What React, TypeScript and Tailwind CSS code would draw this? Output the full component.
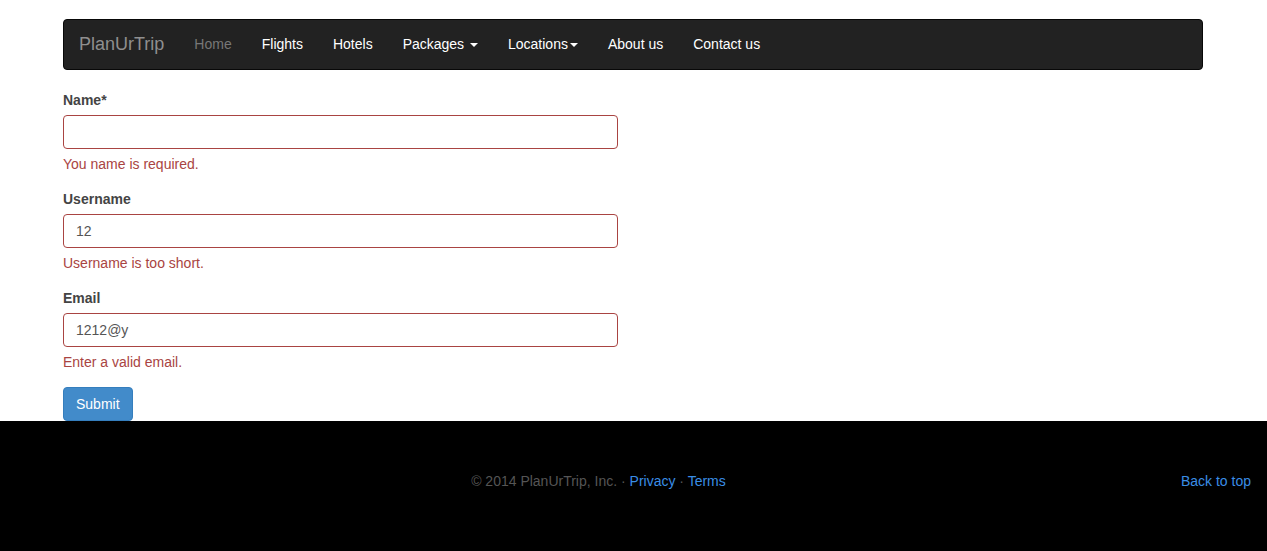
import type { ReactNode } from 'react';

function Caret() {
  return (
    <span className="ml-[2px] inline-block h-0 w-0 border-x-[4px] border-t-[4px] border-x-transparent border-t-white align-middle" />
  );
}

function NavLink({ children, muted }: { children: ReactNode; muted?: boolean }) {
  return (
    <a
      href="#"
      className={
        muted
          ? 'px-[15px] py-[14px] text-[14px] leading-[20px] text-[#777]'
          : 'px-[15px] py-[14px] text-[14px] leading-[20px] text-white'
      }
    >
      {children}
    </a>
  );
}

interface FieldProps {
  label: string;
  value: string;
  error: string;
}

function Field({ label, value, error }: FieldProps) {
  return (
    <div className="mb-[15px]">
      <label className="mb-[5px] block text-[14px] font-bold leading-[20px] text-[#444]">{label}</label>
      <input
        readOnly
        value={value}
        className="block h-[34px] w-full rounded-[4px] border border-[#a94442] bg-white px-[12px] py-[6px] text-[14px] leading-[20px] text-[#555] outline-none"
      />
      <p className="mt-[5px] text-[14px] leading-[20px] text-[#a94442]">{error}</p>
    </div>
  );
}

export default function App() {
  return (
    <div className="min-h-[551px] bg-white font-['Liberation_Sans',Arial,sans-serif]">
      <div className="ml-[48px] w-[1170px] px-[15px] pt-[19px]">
        {/* Navbar */}
        <nav className="mb-[20px] flex h-[51px] items-start rounded-[4px] border border-[#080808] bg-[#222]">
          <a href="#" className="px-[15px] py-[14px] text-[18px] leading-[20px] text-[#8f8f8f]">
            PlanUrTrip
          </a>
          <NavLink muted>Home</NavLink>
          <NavLink>Flights</NavLink>
          <NavLink>Hotels</NavLink>
          <NavLink>
            Packages <Caret />
          </NavLink>
          <NavLink>
            Locations<Caret />
          </NavLink>
          <NavLink>About us</NavLink>
          <NavLink>Contact us</NavLink>
        </nav>

        {/* Form */}
        <form className="w-[555px]">
          <Field label="Name*" value="" error="You name is required." />
          <Field label="Username" value="12" error="Username is too short." />
          <Field label="Email" value="1212@y" error="Enter a valid email." />
          <button
            type="button"
            className="h-[34px] rounded-[4px] border border-[#357ebd] bg-[#428bca] px-[12px] text-[14px] leading-[20px] text-white"
          >
            Submit
          </button>
        </form>
      </div>

      {/* Footer */}
      <footer className="flex h-[130px] items-start bg-black px-[16px] pt-[50px] text-[14px] leading-[20px]">
        <p className="flex-1 text-center text-[#555]">
          © 2014 PlanUrTrip, Inc. · <a href="#" className="text-[#3a8ee6]">Privacy</a> ·{' '}
          <a href="#" className="text-[#3a8ee6]">Terms</a>
        </p>
        <a href="#" className="text-[#3a8ee6]">
          Back to top
        </a>
      </footer>
    </div>
  );
}
